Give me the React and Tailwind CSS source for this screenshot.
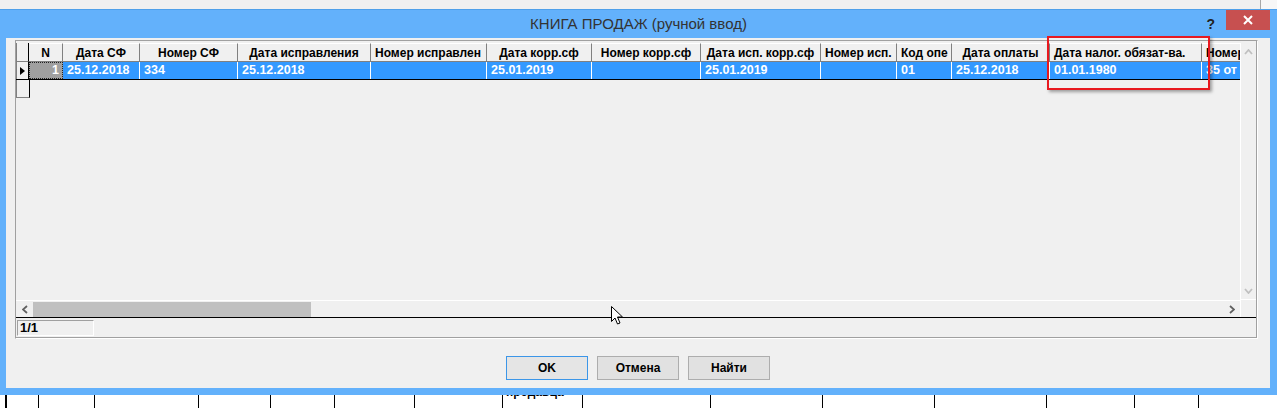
import React from "react";

const cols = [
  { w: 77, h: "Дата СФ", v: "25.12.2018" },
  { w: 98, h: "Номер СФ", v: "334" },
  { w: 133, h: "Дата исправления", v: "25.12.2018" },
  { w: 116, h: "Номер исправлен", v: "", left: true },
  { w: 105, h: "Дата корр.сф", v: "25.01.2019" },
  { w: 109, h: "Номер корр.сф", v: "" },
  { w: 120, h: "Дата исп. корр.сф", v: "25.01.2019" },
  { w: 76, h: "Номер исп.", v: "", left: true },
  { w: 55, h: "Код опе", v: "01", left: true },
  { w: 98, h: "Дата оплаты", v: "25.12.2018" },
  { w: 152, h: "Дата налог. обязат-ва.", v: "01.01.1980", left: true },
  { w: 120, h: "Номер счета", v: "35 от", left: true },
];

// колонки таблицы под окном
const backCols = [31, 56, 104, 72, 64, 80, 88, 80, 128, 112, 112, 112, 88, 64, 79];

const Chevron = ({ dir, color }) => {
  const pts = {
    left: "5,1 1,4.5 5,8",
    right: "1,1 5,4.5 1,8",
    up: "1,5 4.5,1 8,5",
    down: "1,1 4.5,5 8,1",
  }[dir];
  const vertical = dir === "up" || dir === "down";
  return (
    <svg width={vertical ? 9 : 6} height={vertical ? 6 : 9} viewBox={vertical ? "0 0 9 6" : "0 0 6 9"}>
      <polyline points={pts} fill="none" stroke={color} strokeWidth="1.8" />
    </svg>
  );
};

const Cursor = () => (
  <svg width="13" height="20" viewBox="0 0 13 20">
    <path d="M0.5 0.5 L0.5 15.5 L4 12 L6.5 18 L9 17 L6.5 11 L11.5 11 Z" fill="#fff" stroke="#000" strokeWidth="1" />
  </svg>
);

export default function App() {
  return (
    <div
      className="relative w-[1277px] h-[408px] overflow-hidden bg-[#f0f0f0] flex flex-col"
      style={{ fontFamily: '"Liberation Sans", Arial, sans-serif' }}
    >
      {/* полоса над окном */}
      <div className="h-[9px] flex shrink-0">
        <div className="flex-1" />
        <div className="w-[17px] border-l border-[#a8a8a8] bg-[#f7f7f7]" />
      </div>

      {/* окно */}
      <div className="h-[386px] shrink-0 bg-[#63b1fb] border-t border-[#4fa0ea] flex flex-col">
        <div className="h-[28px] grid grid-cols-[1fr_auto_1fr] shrink-0">
          <div />
          <div className="text-[15px] text-[#333] pt-[3px]">КНИГА ПРОДАЖ (ручной ввод)</div>
          <div className="flex justify-end items-start pr-[7px]">
            <span className="mt-[4px] mr-[11px] text-[14px] font-bold text-[#222]">?</span>
            <div className="w-[44px] h-[20px] bg-[#c75050] flex items-center justify-center">
              <svg width="10" height="10" viewBox="0 0 10 10">
                <path d="M1 1 L9 9 M9 1 L1 9" stroke="#fff" strokeWidth="2" />
              </svg>
            </div>
          </div>
        </div>

        <div className="ml-[6px] mr-[7px] h-[350px] bg-[#f0f0f0] flex flex-col">
          {/* сетка */}
          <div className="ml-[9px] mt-[2px] w-[1243px] h-[299px] border border-t-[#a0a0a0] border-l-[#a0a0a0] border-r-white border-b-white flex flex-col">
            <div className="pt-[2px] flex flex-col border-r border-[#a0a0a0]">
              <div className="h-[274px] flex">
                <div className="w-[1224px] flex flex-col">
                  <div className="flex-1 overflow-hidden">
                    {/* заголовок */}
                    <div className="flex h-[19px] w-[2000px] text-[12px] font-bold text-black">
                      <div className="w-[13px] shrink-0 border-l border-[#808080] border-r border-r-black border-b border-b-[#808080] bg-[#f0f0f0]" />
                      <div className="w-[34px] shrink-0 flex items-center justify-center border-r border-b border-[#808080] border-t border-t-white">N</div>
                      {cols.map((c, i) => (
                        <div
                          key={i}
                          style={{ width: c.w }}
                          className={`shrink-0 flex items-center overflow-hidden whitespace-nowrap border-r border-b border-[#808080] border-t border-t-white ${c.left ? "justify-start pl-[4px]" : "justify-center"}`}
                        >
                          {c.h}
                        </div>
                      ))}
                    </div>
                    {/* выбранная строка */}
                    <div className="flex h-[18px] w-[2000px] border-b border-black text-[12.5px] font-bold text-white">
                      <div className="w-[13px] shrink-0 border-l border-[#808080] border-r border-r-black bg-[#f0f0f0] flex items-center pl-[3px]">
                        <svg width="5" height="8" viewBox="0 0 5 8">
                          <path d="M0 0 L5 4 L0 8 Z" fill="#000" />
                        </svg>
                      </div>
                      <div className="w-[34px] shrink-0 bg-[#a0a0a0] border border-dotted border-[#222] flex items-center justify-end pr-[3px]">1</div>
                      {cols.map((c, i) => (
                        <div
                          key={i}
                          style={{ width: c.w }}
                          className="shrink-0 bg-[#3399ff] border-r border-white flex items-center pl-[4px] overflow-hidden whitespace-nowrap"
                        >
                          {c.v}
                        </div>
                      ))}
                    </div>
                    {/* новая строка */}
                    <div className="flex h-[18px]">
                      <div className="w-[14px] shrink-0 border-l border-[#808080] border-r border-r-black border-b border-b-[#808080] bg-[#f0f0f0]" />
                    </div>
                  </div>
                  {/* горизонтальная прокрутка */}
                  <div className="h-[17px] border-t border-white flex items-center">
                    <div className="w-[17px] flex justify-center">
                      <Chevron dir="left" color="#606060" />
                    </div>
                    <div className="w-[278px] h-[15px] bg-[#c0c0c0]" />
                    <div className="flex-1" />
                    <div className="w-[17px] flex justify-center">
                      <Chevron dir="right" color="#606060" />
                    </div>
                  </div>
                </div>
                {/* вертикальная прокрутка */}
                <div className="w-[17px] border-l border-white flex flex-col">
                  <div className="h-[17px] flex items-center justify-center">
                    <Chevron dir="up" color="#c0c0c0" />
                  </div>
                  <div className="h-[223px]" />
                  <div className="h-[17px] flex items-center justify-center border-b border-white">
                    <Chevron dir="down" color="#c0c0c0" />
                  </div>
                </div>
              </div>
              <div className="h-px bg-black" />
              {/* статусная строка */}
              <div className="h-[20px] border-b border-[#a0a0a0] pl-[1px] pt-[2px]">
                <div className="w-[77px] h-[16px] border border-t-[#a0a0a0] border-l-[#a0a0a0] border-r-white border-b-white flex items-center pl-[2px] text-[13px] font-bold text-black">
                  1/1
                </div>
              </div>
            </div>
          </div>

          {/* кнопки */}
          <div className="mt-[17px] flex justify-center gap-[9px] text-[12px] font-bold text-black">
            <button className="w-[82px] h-[24px] border border-[#3c96e8] bg-[#e5e5e5]">OK</button>
            <button className="w-[82px] h-[24px] border border-[#adadad] bg-[#e1e1e1]">Отмена</button>
            <button className="w-[82px] h-[24px] border border-[#adadad] bg-[#e1e1e1]">Найти</button>
          </div>
        </div>
      </div>

      {/* таблица под окном */}
      <div className="h-[13px] flex bg-white shrink-0">
        <div className="w-[5px] bg-white" />
        <div className="w-[2px] bg-black" />
        {backCols.map((w, i) => (
          <div key={i} style={{ width: w }} className={`shrink-0 overflow-hidden ${i > 0 ? "border-l border-black" : ""}`}>
            {i === 7 && <div className="mt-[-10px] pl-[3px] text-[12px] font-bold text-black leading-[14px]">продавца</div>}
          </div>
        ))}
      </div>

      {/* красная рамка */}
      <div className="absolute left-[1047px] top-[36px] w-[163px] h-[54px] border-2 border-[#e8191f] shadow-[2px_2px_3px_rgba(0,0,0,0.35)]" />

      {/* курсор */}
      <div className="absolute left-[611px] top-[306px]">
        <Cursor />
      </div>
    </div>
  );
}
